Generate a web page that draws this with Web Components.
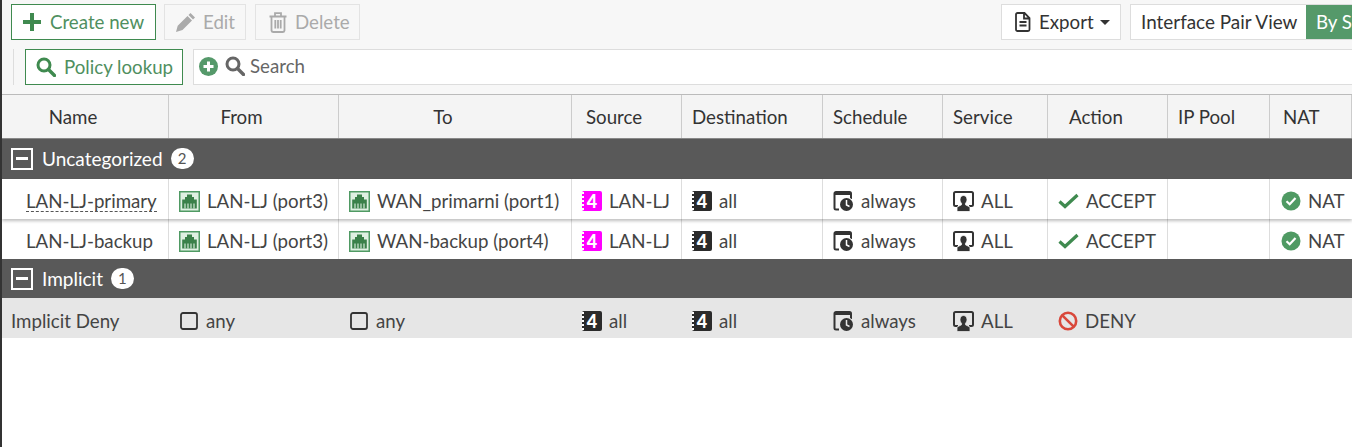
<!DOCTYPE html>
<html><head><meta charset="utf-8">
<style>
html,body{margin:0;padding:0;height:447px;overflow:hidden;background:#fff}
body{font:18.7px/24px Lato,"Open Sans",sans-serif;color:#333;border-left:2px solid #333;width:1350px;
--cols:167px 170px 233px 110px 141px 120px 105px 120px 102px 82px}
</style></head><body>
<fw-toolbar></fw-toolbar>
<fw-searchbar></fw-searchbar>
<fw-header></fw-header>
<fw-group label="Uncategorized" count="2"></fw-group>
<fw-row name="LAN-LJ-primary" dashed from="LAN-LJ (port3)" to="WAN_primarni (port1)" src="LAN-LJ" magenta action="ACCEPT" nat shadow></fw-row>
<fw-row name="LAN-LJ-backup" from="LAN-LJ (port3)" to="WAN-backup (port4)" src="LAN-LJ" magenta action="ACCEPT" nat></fw-row>
<fw-group label="Implicit" count="1" short></fw-group>
<fw-row name="Implicit Deny" implicit from="any" to="any" src="all" action="DENY"></fw-row>
<script>
const I={
plus:'<svg width="18" height="18" viewBox="0 0 18 18"><path d="M7 0h4v7h7v4h-7v7H7v-7H0V7h7z" fill="#3f8a4f"/></svg>',
pencil:'<svg width="21" height="21" viewBox="0 0 21 21"><path d="M15.500 1l4.500 4.500-2 2-4.500-4.500zM12.500 4l4.500 4.500-9.500 9.500-6.500 2 1.700-6.200z" fill="#aaa"/></svg>',
trash:'<svg width="18" height="21" viewBox="0 0 18 21"><path d="M6 3.500V1.200h6v2.300M.5 4.500h17M2.500 4.500v14A1.800 1.800 0 0 0 4.300 20h9.400a1.800 1.800 0 0 0 1.800-1.500v-14M6.300 8v8.500M9 8v8.500M11.700 8v8.500" fill="none" stroke="#aaa" stroke-width="1.800"/></svg>',
doc:'<svg width="16" height="20" viewBox="0 0 16 20"><path d="M2.500 1h7l5 5v11.500a1.500 1.500 0 0 1-1.500 1.500H2.500A1.500 1.500 0 0 1 1 17.500v-15A1.500 1.500 0 0 1 2.500 1zM9 1.500V6.500h5M4.500 10h7M4.500 13.500h7" fill="none" stroke="#333" stroke-width="1.800"/></svg>',
mag:c=>`<svg width="20" height="20" viewBox="0 0 20 20"><circle cx="8" cy="8" r="6" fill="none" stroke="${c}" stroke-width="3"/><path d="M12.500 12.500l6 6" stroke="${c}" stroke-width="3.400" stroke-linecap="round"/></svg>`,
addc:'<svg width="19" height="19" viewBox="0 0 19 19"><circle cx="9.500" cy="9.500" r="9.500" fill="#55996a"/><path d="M8 4.500h3V8h3.500v3H11v3.500H8V11H4.500V8H8z" fill="#fff"/></svg>',
port:'<svg width="21" height="21" viewBox="0 0 21 21"><rect x=".75" y=".75" width="19.500" height="19.500" fill="#dff0e2" stroke="#4f9a63" stroke-width="1.500"/><path d="M8 3.500h5v2.500h2v2.500h2.800v9H3.200v-9H6V6h2z" fill="#3a8049"/><path d="M6 12.500v5M9 12.500v5M12 12.500v5M15 12.500v5" stroke="#dff0e2" stroke-width="1.100"/></svg>',
any:'<svg width="18" height="18" viewBox="0 0 18 18"><rect x="1" y="1" width="16" height="16" rx="2" fill="none" stroke="#333" stroke-width="1.800"/></svg>',
sched:'<svg width="21" height="21" viewBox="0 0 21 21"><path d="M6 18.500H3A1.500 1.500 0 0 1 1.500 17V2.500A1.500 1.500 0 0 1 3 1h13.500A1.500 1.500 0 0 1 18 2.500V8" fill="none" stroke="#333" stroke-width="2"/><rect x="1.500" y="1" width="16.500" height="3" fill="#333"/><circle cx="13.500" cy="13.500" r="7.500" fill="var(--b,#fff)"/><circle cx="13.500" cy="13.500" r="6.500" fill="#333"/><path d="M13.500 9v5l3 1.500" fill="none" stroke="var(--b,#fff)" stroke-width="1.500"/></svg>',
svc:'<svg width="21" height="21" viewBox="0 0 21 21"><path d="M5 15H2.500A1.500 1.500 0 0 1 1 13.500v-11A1.500 1.500 0 0 1 2.500 1h16A1.500 1.500 0 0 1 20 2.500v11a1.500 1.500 0 0 1-1.500 1.500H16" fill="none" stroke="#333" stroke-width="2"/><path d="M10.500 4.500c2.300 0 3.500 1.700 3.500 4 0 1.600-.7 3-1.500 3.800v1.500l4.500 2.200V20.500H4v-4.500l4.500-2.200v-1.500C7.700 11.500 7 10.100 7 8.500c0-2.300 1.200-4 3.500-4z" fill="#333" stroke="var(--b,#fff)" stroke-width=".8"/></svg>',
check:'<svg width="21" height="16" viewBox="0 0 21 16"><path d="M1.500 8.500l5.500 5L19.500 2" fill="none" stroke="#3f8a4f" stroke-width="3.200"/></svg>',
natc:'<svg width="20" height="20" viewBox="0 0 20 20"><circle cx="10" cy="10" r="9.500" fill="#4f9a63"/><path d="M5.500 10.200l3.200 3L14.500 7" fill="none" stroke="#fff" stroke-width="2.200"/></svg>',
deny:'<svg width="20" height="20" viewBox="0 0 20 20"><circle cx="10" cy="10" r="8.200" fill="none" stroke="#d9483b" stroke-width="2.600"/><path d="M4.300 4.300l11.400 11.400" stroke="#d9483b" stroke-width="2.600"/></svg>'
};
const def=(n,c)=>customElements.define(n,c);
class Base extends HTMLElement{
  render(css,html){const r=this.shadowRoot||this.attachShadow({mode:'open'});r.innerHTML=`<style>${css}</style>${html}`}
}
def('fw-toolbar',class extends Base{connectedCallback(){
  this.render(`:host{display:flex;height:49px;box-sizing:border-box;background:#f7f7f7;padding:4px 0 0 9px;overflow:hidden;align-items:flex-start}
  .b{display:inline-flex;align-items:center;box-sizing:border-box;height:36px;border:1px solid #ddd;background:#fff;white-space:nowrap}
  .g{border-color:#3f8a4f;color:#4f8f60;padding:0 0 0 11px;gap:9px;width:145px}
  .o{border-color:#e3e3e3;color:#aaa;background:#f7f7f7}
  .sp{flex:1}
  .caret{width:0;height:0;border:5px solid transparent;border-top-color:#333;border-bottom:0}
  .view{display:flex;height:36px;box-sizing:border-box;border:1px solid #ddd;border-right:0;background:#fff;width:222px;flex:none;overflow:hidden;font-size:18.9px}
  .view span{box-sizing:border-box;width:175px;padding-left:10px;line-height:34px;white-space:nowrap;flex:none}
  .view .on{background:#55996a;color:#fff;padding-left:10px;flex:1;width:auto;font-size:18.7px}`,
  `<span class="b g">${I.plus}<span>Create new</span></span>
  <span class="b o" style="margin-left:8px;width:82px;padding-left:10px;gap:7px">${I.pencil}<span>Edit</span></span>
  <span class="b o" style="margin-left:9px;width:105px;padding-left:13px;gap:8px">${I.trash}<span>Delete</span></span>
  <span class="sp"></span>
  <span class="b" style="width:120px;padding-left:13px;gap:8px">${I.doc}<span>Export</span><i class="caret" style="margin-left:-2px"></i></span>
  <span class="view" style="margin-left:9px"><span>Interface Pair View</span><span class="on">By S</span></span>`);
}});
def('fw-searchbar',class extends Base{connectedCallback(){
  this.render(`:host{display:flex;height:45px;box-sizing:border-box;background:#f7f7f7;padding:0 0 9px 0;align-items:stretch}
  .sep{width:1px;background:#ddd;margin-left:11px;flex:none}
  .g{display:inline-flex;align-items:center;box-sizing:border-box;border:1px solid #3f8a4f;color:#4f8f60;background:#fff;width:158px;margin-left:11px;padding-left:10px;gap:8px;white-space:nowrap}
  .s{flex:1;margin-left:10px;border:1px solid #ddd;border-right:0;display:flex;align-items:center;padding:0 0 2px 5px;color:#666;background:#fff}
  .s svg:nth-child(2){margin-left:7px;margin-right:5px}`,
  `<span class="sep"></span><span class="g">${I.mag('#3f8a4f')}<span>Policy lookup</span></span>
  <div class="s">${I.addc}${I.mag('#666')}<span>Search</span></div>`);
}});
def('fw-header',class extends Base{connectedCallback(){
  const H=[['Name',1],['From',1],['To',1],['Source',0,14],['Destination'],['Schedule'],['Service'],['Action',0,21],['IP Pool'],['NAT',0,13]];
  this.render(`:host{display:grid;grid-template-columns:var(--cols);height:45px;box-sizing:border-box;background:#f4f4f4;border-top:1px solid #bbb;border-bottom:1px solid #888;overflow:hidden}
  div{line-height:45px;padding-left:10px;border-right:1px solid #ccc;white-space:nowrap}
  .c{text-align:center;padding:0 24px 0 0}`,
  H.map(h=>`<div class="${h[1]?'c':''}" style="${h[2]?'padding-left:'+h[2]+'px':''}">${h[0]}</div>`).join(''));
}});
def('fw-group',class extends Base{connectedCallback(){
  const l=this.getAttribute('label'),c=this.getAttribute('count');
  this.render(`:host{display:flex;align-items:center;height:40px;box-sizing:border-box;background:#595959;color:#fff;padding:0 0 1px 9px;white-space:nowrap;font-size:19px}
  :host([short]){height:39px;padding-bottom:0}
  .box{width:22px;height:22px;box-sizing:border-box;border:2px solid #fff;display:flex;align-items:center;justify-content:center;margin-right:9px}
  .box i{width:12px;height:3px;background:#fff}
  .n{margin-left:8px;min-width:23px;height:21px;border-radius:11px;background:#fff;color:#555;font-size:15px;line-height:21px;text-align:center}`,
  `<span class="box"><i></i></span><span>${l}</span><span class="n">${c}</span>`);
}});
def('fw-addr',class extends Base{connectedCallback(){
  this.render(`:host{display:inline-flex;position:relative;width:20px;height:20px;box-sizing:border-box;border-radius:2px;background:#2b2b2b;color:#fff;font:900 18px/20px Lato,sans-serif;align-items:center;justify-content:center;flex:none}
  :host([magenta]){background:#f0f}
  :host::before{content:"";position:absolute;left:0;top:1px;bottom:1px;border-left:2px dotted #fff}`,`<slot></slot>`);
}});
def('fw-row',class extends Base{connectedCallback(){
  const a=n=>this.getAttribute(n),imp=this.hasAttribute('implicit'),mag=this.hasAttribute('magenta');
  const cell=(ic,t,st='')=>`<div class="c" style="${st}">${ic}<span>${t}</span></div>`;
  const addr=`<fw-addr ${mag?'magenta':''}>4</fw-addr>`;
  const ifs=imp?'padding-left:11px;gap:8px':'';
  const act=a('action')=='DENY'?I.deny:I.check;
  this.render(`:host{display:grid;grid-template-columns:var(--cols);height:40px;box-sizing:border-box;background:#fff;position:relative;overflow:hidden;--b:#fff}
  :host([implicit]){background:#e6e6e6;--b:#e6e6e6}
  :host([shadow]){box-shadow:0 2px 3px rgba(0,0,0,.25);z-index:1;overflow:visible}
  .c{display:flex;align-items:center;gap:7px;padding:4px 0 0 10px;border-right:1px solid #ddd;white-space:nowrap;color:#444}
  :host([implicit]) .c{border-right:0;padding-top:6px}
  .nm{padding-left:24px}
  :host([implicit]) .nm{padding-left:9px}
  .d{border-bottom:1px dashed #555;line-height:20px;margin-bottom:-1px}
  svg{flex:none}`,
  `<div class="c nm"><span class="${this.hasAttribute('dashed')?'d':''}">${a('name')}</span></div>`+
  cell(imp?I.any:I.port,a('from'),ifs)+cell(imp?I.any:I.port,a('to'),ifs)+cell(addr,a('src'))+cell(`<fw-addr>4</fw-addr>`,'all')+
  cell(I.sched,'always')+cell(I.svc,'ALL')+cell(act,a('action'))+`<div class="c"></div>`+
  (this.hasAttribute('nat')?cell(I.natc,'NAT','border-right:0;padding-left:11px'):`<div class="c" style="border-right:0"></div>`));
}});
</script>
</body></html>
